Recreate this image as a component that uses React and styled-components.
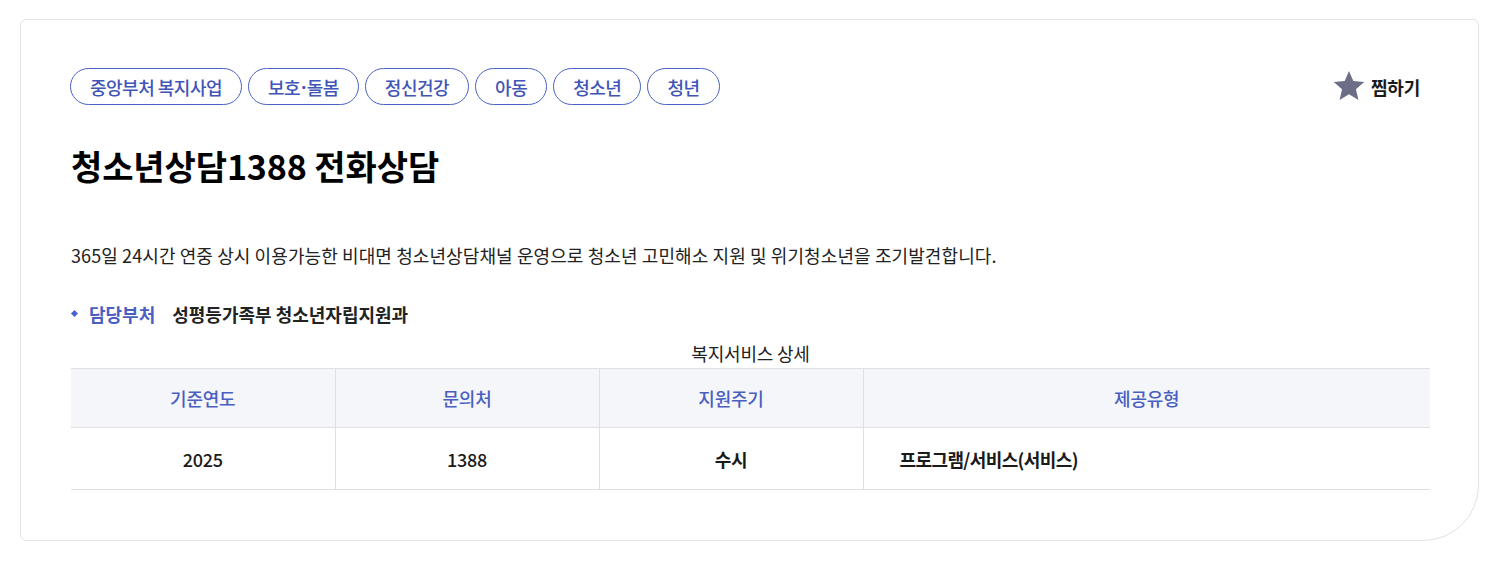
import React from "react";
import styled, { createGlobalStyle } from "styled-components";

const GlobalStyle = createGlobalStyle`
  html, body {
    margin: 0;
    padding: 0;
    background: #ffffff;
    font-family: "Noto Sans CJK KR", "Noto Sans", sans-serif;
    color: #222222;
  }
`;

const Card = styled.section`
  box-sizing: border-box;
  margin: 19px 19px 0 20px;
  height: 522px;
  padding: 48px 48px 0 49px;
  border: 1px solid #e2e2e2;
  border-radius: 6px 6px 56px 6px;
  background: #fff;
`;

const TopRow = styled.div`
  display: flex;
  align-items: center;
  justify-content: space-between;
`;

const Tags = styled.ul`
  display: flex;
  gap: 6px;
  margin: 0;
  padding: 0;
  list-style: none;
`;

const Tag = styled.li`
  box-sizing: border-box;
  height: 37px;
  padding: 0 19px;
  display: flex;
  align-items: center;
  border: 1px solid #4a62c4;
  border-radius: 19px;
  color: #3f55b8;
  font-size: 18px;
  font-weight: 500;
  letter-spacing: -0.5px;
`;

const Dot = styled.span`
  font-family: "Noto Sans", sans-serif;
  font-weight: 700;
  margin: 0 1px;
`;

const LikeButton = styled.button`
  display: flex;
  align-items: center;
  gap: 5px;
  margin-right: 10px;
  padding: 0;
  border: 0;
  background: none;
  font-family: inherit;
  font-size: 18px;
  font-weight: 700;
  letter-spacing: -0.2px;
  color: #1a1a1a;
  cursor: pointer;
`;

const Title = styled.h2`
  margin: 38px 0 0 1px;
  font-size: 34px;
  font-weight: 700;
  letter-spacing: -0.1px;
  line-height: 46px;
  color: #000;
`;

const Desc = styled.p`
  margin: 53px 0 0 1px;
  font-size: 18px;
  line-height: 26px;
  letter-spacing: 0.1px;
  color: #222;
`;

const DeptRow = styled.div`
  display: flex;
  align-items: center;
  margin: 33px 0 0 1px;
  font-size: 18px;
  line-height: 26px;
  letter-spacing: 0;
`;

const DeptLabel = styled.span`
  position: relative;
  padding-left: 18px;
  margin-right: 17px;
  color: #4a5fc1;
  font-weight: 700;

  &::before {
    content: "";
    position: absolute;
    left: 1px;
    top: 10px;
    width: 5px;
    height: 5px;
    background: #4a62d0;
    transform: rotate(45deg);
  }
`;

const DeptValue = styled.span`
  color: #222;
  font-weight: 700;
`;

const Table = styled.table`
  width: calc(100% - 1px);
  margin: 13px 0 0 1px;
  border-collapse: collapse;
  table-layout: fixed;
  font-size: 18px;
  letter-spacing: -0.2px;

  caption {
    font-size: 18px;
    line-height: 26px;
    color: #222;
    padding-bottom: 2px;
  }
`;

const Th = styled.th`
  height: 58px;
  padding: 0;
  background: #f5f6fa;
  color: #4a5fc1;
  font-weight: 500;
  border-top: 1px solid #e0e0e0;
  border-bottom: 1px solid #e0e0e0;
  border-left: 1px solid #e0e0e0;

  &:first-child {
    border-left: 0;
  }
`;

const Td = styled.td`
  height: 61px;
  padding: 0 ${(p) => (p.$left ? "36px" : "0")};
  text-align: ${(p) => (p.$left ? "left" : "center")};
  color: #1a1a1a;
  font-weight: ${(p) => (p.$bold ? 700 : 500)};
  letter-spacing: ${(p) => (p.$left ? "-0.6px" : "-0.2px")};
  border-bottom: 1px solid #e0e0e0;
  border-left: 1px solid #e0e0e0;

  &:first-child {
    border-left: 0;
  }
`;

const StarIcon = () => (
  <svg width="34" height="33" viewBox="0 0 24 23" aria-hidden="true">
    <path
      d="M12 0.6l3.05 7.1 7.7 0.65-5.85 5.05 1.75 7.55L12 16.95 5.35 20.95l1.75-7.55L1.25 8.35l7.7-0.65z"
      fill="#6b6e86"
    />
  </svg>
);

const tags = [
  "중앙부처 복지사업",
  <>
    보호<Dot>·</Dot>돌봄
  </>,
  "정신건강",
  "아동",
  "청소년",
  "청년",
];

export default function App() {
  return (
    <>
      <GlobalStyle />
      <Card>
        <TopRow>
          <Tags>
            {tags.map((t, i) => (
              <Tag key={i}>{t}</Tag>
            ))}
          </Tags>
          <LikeButton type="button">
            <StarIcon />
            찜하기
          </LikeButton>
        </TopRow>
        <Title>청소년상담1388 전화상담</Title>
        <Desc>
          365일 24시간 연중 상시 이용가능한 비대면 청소년상담채널 운영으로 청소년 고민해소 지원 및 위기청소년을 조기발견합니다.
        </Desc>
        <DeptRow>
          <DeptLabel>담당부처</DeptLabel>
          <DeptValue>성평등가족부 청소년자립지원과</DeptValue>
        </DeptRow>
        <Table>
          <caption>복지서비스 상세</caption>
          <colgroup>
            <col style={{ width: "264px" }} />
            <col style={{ width: "264px" }} />
            <col style={{ width: "264px" }} />
            <col />
          </colgroup>
          <thead>
            <tr>
              <Th>기준연도</Th>
              <Th>문의처</Th>
              <Th>지원주기</Th>
              <Th>제공유형</Th>
            </tr>
          </thead>
          <tbody>
            <tr>
              <Td>2025</Td>
              <Td>1388</Td>
              <Td $bold>수시</Td>
              <Td $left $bold>프로그램/서비스(서비스)</Td>
            </tr>
          </tbody>
        </Table>
      </Card>
    </>
  );
}
